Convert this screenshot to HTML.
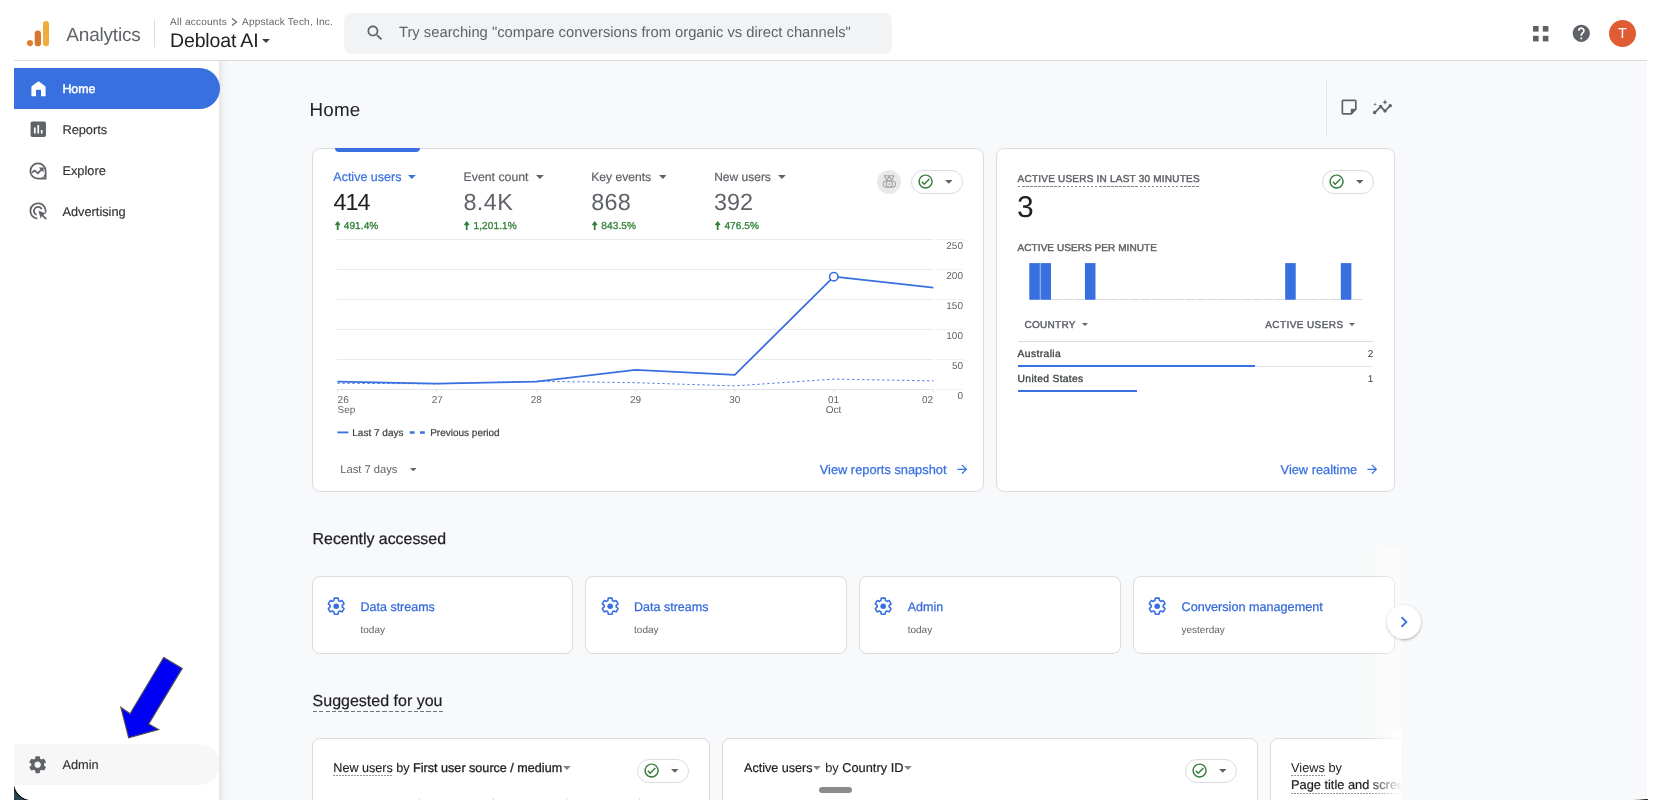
<!DOCTYPE html>
<html lang="en">
<head>
<meta charset="utf-8">
<title>Analytics | Home</title>
<style>
*{box-sizing:border-box;margin:0;padding:0}
html,body{width:1658px;height:806px;overflow:hidden;background:#fff}
body{text-rendering:geometricPrecision;font-family:"Liberation Sans",sans-serif;color:#202124;position:relative;-webkit-font-smoothing:antialiased}
.abs{position:absolute}
.t{position:absolute;white-space:nowrap;line-height:1}
#win{will-change:transform;position:absolute;left:14px;top:0;width:1633px;height:800px;background:#f8f9fa;overflow:hidden;border-radius:0 0 0 18px}
#hdr{position:absolute;left:0;top:0;width:1633px;height:61px;background:#fff;border-bottom:1px solid #dadce0}
#side{position:absolute;left:0;top:61px;width:205px;height:739px;background:#fff}
#sideshadow{position:absolute;left:205.4px;top:61px;width:10px;height:739px;background:linear-gradient(90deg,rgba(60,64,67,.1),rgba(60,64,67,.03) 45%,rgba(60,64,67,0))}
.nav{position:absolute;left:0;width:205.5px;height:41px;border-radius:0 21px 21px 0}
.nav .t{left:48.4px;top:15.3px;font-size:12.8px;color:#2e3033;-webkit-text-stroke:.15px #2e3033}
.card{position:absolute;background:#fff;border:1px solid #dadce0;border-radius:8px}
.blue{color:#3870e0}
.gray{color:#5f6368}
.pill{position:absolute;width:52px;height:24px;border:1px solid #dadce0;border-radius:12px;background:#fff}
</style>
</head>
<body>
<!-- dark corners behind the window's rounded bottom -->
<div class="abs" style="left:14px;top:781px;width:19px;height:19px;background:radial-gradient(circle at 19px 0,#000 0 19.6px,#25404b 21.2px,#2e4d58 24px,#1c2a22 27px)"></div>

<div id="win">
  <div id="hdr">
    <!-- GA logo -->
    <svg class="abs" style="left:13.1px;top:18px" width="26" height="32" viewBox="0 0 26 32">
      <circle cx="16.0" cy="25.1" r="3.1" fill="#e0802e" transform="translate(-13.0,0)"/>
      <rect x="7.7" y="12.5" width="6.3" height="15.8" rx="3.15" fill="#d9782c"/>
      <rect x="16.0" y="3.0" width="6.0" height="25.3" rx="3" fill="#efac3c"/>
    </svg>
    <div class="t" style="left:52.3px;top:25.9px;font-size:19px;color:#5f6368;letter-spacing:-.2px">Analytics</div>
    <div class="abs" style="left:140px;top:20px;width:1px;height:27px;background:#dadce0"></div>
    <div class="t gray" style="left:156px;top:17.6px;font-size:10px;letter-spacing:.25px">All accounts</div>
    <svg class="abs" style="left:217.4px;top:17.6px" width="7" height="8" viewBox="0 0 7 8"><path d="M1 .5 5.6 4 1 7.5" fill="none" stroke="#5f6368" stroke-width="1.1"/></svg>
    <div class="t gray" style="left:228px;top:17.6px;font-size:10px;letter-spacing:.235px">Appstack Tech, Inc.</div>
    <div class="t" style="left:156px;top:32px;font-size:19.5px;letter-spacing:-.15px;color:#202124">Debloat AI</div>
    <svg class="abs" style="left:248px;top:38.6px" width="8" height="4" viewBox="0 0 8 4"><path d="M0 0h8L4 4z" fill="#3c4043"/></svg>
    <!-- search -->
    <div class="abs" style="left:330px;top:13px;width:548px;height:41px;border-radius:8px;background:#f1f3f4"></div>
    <svg class="abs" style="left:350.8px;top:23px" width="20" height="20" viewBox="0 0 24 24"><path fill="#5f6368" d="M15.5 14h-.79l-.28-.27C15.41 12.59 16 11.11 16 9.5 16 5.91 13.09 3 9.5 3S3 5.91 3 9.5 5.91 16 9.5 16c1.61 0 3.09-.59 4.23-1.57l.27.28v.79l5 4.99L20.49 19l-4.99-5zm-6 0C7.01 14 5 11.99 5 9.5S7.01 5 9.5 5 14 7.01 14 9.5 11.99 14 9.5 14z"/></svg>
    <div class="t gray" style="left:385px;top:26.2px;font-size:14.75px">Try searching "compare conversions from organic vs direct channels"</div>
    <!-- right icons -->
    <svg class="abs" style="left:1518.8px;top:26px" width="16" height="16" viewBox="0 0 16 16"><g fill="#5f6060"><rect x="0" y="0" width="5.6" height="5.6"/><rect x="9.8" y="0" width="5.6" height="5.6"/><rect x="0" y="9.8" width="5.6" height="5.6"/><rect x="9.8" y="9.8" width="5.6" height="5.6"/></g></svg>
    <svg class="abs" style="left:1557.2px;top:23.2px" width="20.6" height="20.6" viewBox="0 0 24 24"><path fill="#5f6368" d="M12 2C6.48 2 2 6.48 2 12s4.48 10 10 10 10-4.48 10-10S17.52 2 12 2zm1 17h-2v-2h2v2zm2.07-7.75l-.9.92C13.45 12.9 13 13.5 13 15h-2v-.5c0-1.1.45-2.1 1.17-2.83l1.24-1.26c.37-.36.59-.86.59-1.41 0-1.1-.9-2-2-2s-2 .9-2 2H8c0-2.21 1.79-4 4-4s4 1.79 4 4c0 .88-.36 1.68-.93 2.25z"/></svg>
    <div class="abs" style="left:1594.8px;top:19.9px;width:27.3px;height:27.3px;border-radius:50%;background:#e05d33"></div>
    <div class="t" style="left:1594.8px;top:26.5px;width:27.3px;text-align:center;font-size:14.5px;color:#fff">T</div>
  </div>
  <div id="side">
    <div class="nav" style="top:7px;background:#3870e0"><div class="t" style="color:#fff;font-size:12.4px;top:15.2px;-webkit-text-stroke:.45px #fff">Home</div>
      <svg class="abs" style="left:16.5px;top:12.6px" width="15" height="16" viewBox="0 0 15 16"><path fill="#fff" d="M.4 15.3V6.2Q.4 5.5 1 5.1L6.7.8Q7.5.3 8.3.8L14 5.1Q14.6 5.5 14.6 6.2V15.3H10V9.3Q10 8.7 9.4 8.7H5.6Q5 8.7 5 9.3V15.3Z"/></svg>
    </div>
    <div class="nav" style="top:48px"><div class="t">Reports</div>
      <svg class="abs" style="left:13.7px;top:10.2px" width="20.5" height="20.5" viewBox="0 0 24 24"><path fill="#5f6368" d="M19 3H5c-1.1 0-2 .9-2 2v14c0 1.1.9 2 2 2h14c1.1 0 2-.9 2-2V5c0-1.1-.9-2-2-2zM9 17H7v-7h2v7zm4 0h-2V7h2v10zm4 0h-2v-4h2v4z"/></svg>
    </div>
    <div class="nav" style="top:89px"><div class="t">Explore</div>
      <svg class="abs" style="left:13.85px;top:10.8px" width="20" height="20" viewBox="0 0 20 20"><path d="M10 2.35A7.65 7.65 0 1 0 10 17.65H17.65V10A7.65 7.65 0 0 0 10 2.35Z" fill="none" stroke="#5f6368" stroke-width="1.75" stroke-linejoin="round"/><path d="M17.65 10.6A7.65 7.65 0 0 1 10.6 17.65H17.65Z" fill="#5f6368"/><circle cx="16.1" cy="16.1" r=".55" fill="#fff"/><path d="M3.7 11.6 6.8 9.5 9.8 12.3 13.4 8.7" fill="none" stroke="#5f6368" stroke-width="1.7" stroke-linejoin="round"/><path d="M10.8 6.5H15.6V11.3Z" fill="#5f6368"/></svg>
    </div>
    <div class="nav" style="top:130px"><div class="t">Advertising</div>
      <svg class="abs" style="left:13.85px;top:10.2px" width="20" height="20" viewBox="0 0 20 20"><g fill="none" stroke="#5f6368" stroke-width="1.8"><path d="M9.3 17.62A7.65 7.65 0 1 1 17.45 11.75"/><path d="M8.6 13.85A4.1 4.1 0 1 1 13.7 8.2"/></g><path d="M10.5 9.7 18.1 12.4 15.1 13.75 18.9 17.5 17.6 18.8 13.85 15 12.6 17.7Z" fill="#5f6368"/></svg>
    </div>
    <div class="nav" style="top:683px;background:#f7f7f7"><div class="t">Admin</div>
      <svg class="abs" style="left:13.4px;top:9.8px" width="21.3" height="21.3" viewBox="0 0 24 24"><path fill="#5f6368" d="M19.14 12.94c.04-.3.06-.61.06-.94 0-.32-.02-.64-.07-.94l2.03-1.58c.18-.14.23-.41.12-.61l-1.92-3.32c-.12-.22-.37-.29-.59-.22l-2.39.96c-.5-.38-1.03-.7-1.62-.94l-.36-2.54c-.04-.24-.24-.41-.48-.41h-3.84c-.24 0-.43.17-.47.41l-.36 2.54c-.59.24-1.13.57-1.62.94l-2.39-.96c-.22-.08-.47 0-.59.22L2.74 8.87c-.12.21-.08.47.12.61l2.03 1.58c-.05.3-.09.63-.09.94s.02.64.07.94l-2.03 1.58c-.18.14-.23.41-.12.61l1.92 3.32c.12.22.37.29.59.22l2.39-.96c.5.38 1.03.7 1.62.94l.36 2.54c.05.24.24.41.48.41h3.84c.24 0 .44-.17.47-.41l.36-2.54c.59-.24 1.13-.56 1.62-.94l2.39.96c.22.08.47 0 .59-.22l1.92-3.32c.12-.22.07-.47-.12-.61l-2.01-1.58zM12 15.6c-1.98 0-3.6-1.62-3.6-3.6s1.62-3.6 3.6-3.6 3.6 1.62 3.6 3.6-1.62 3.6-3.6 3.6z"/></svg>
    </div>
    <!-- annotation arrow -->
    <svg class="abs" style="left:100px;top:590px" width="80" height="95" viewBox="114 651 80 95"><path d="M163.7 657.5 182.2 668.4 148.7 724 158.5 729.6 128.7 737.8 120.9 707.5 130.1 713.7Z" fill="#0000f5" stroke="#4d4d4d" stroke-width="1.2"/></svg>
  </div>
  <div id="sideshadow"></div>
  <div id="main" style="position:absolute;left:-14px;top:0;width:1658px;height:800px">
<div class="t" style="left:309.5px;top:101.1px;font-size:18.8px;letter-spacing:.2px;color:#202124">Home</div>
<div class="abs" style="left:1326px;top:80px;width:1px;height:55px;background:#e3e5e8"></div>
<svg class="abs" style="left:1338.6px;top:97.1px" width="20.2" height="20.2" viewBox="0 0 24 24"><path fill="#5f6368" d="M19 5v9h-5v5H5V5h14m0-2H5c-1.1 0-2 .9-2 2v14c0 1.1.9 2 2 2h10l6-6V5c0-1.1-.9-2-2-2z"/><path fill="#5f6368" d="M14.5 19.6V14.5h5.1z"/></svg>
<svg class="abs" style="left:1372.3px;top:97.4px" width="20.8" height="20.8" viewBox="0 0 24 24"><path fill="#5f6368" d="M21 8c-1.45 0-2.26 1.44-1.93 2.51l-3.55 3.56c-.3-.09-.74-.09-1.04 0l-2.55-2.55C12.27 10.45 11.46 9 10 9c-1.45 0-2.27 1.44-1.93 2.52l-4.56 4.55C2.44 15.74 1 16.55 1 18c0 1.1.9 2 2 2 1.45 0 2.26-1.44 1.93-2.51l4.55-4.56c.3.09.74.09 1.04 0l2.55 2.55C12.73 16.55 13.54 18 15 18c1.45 0 2.27-1.44 1.93-2.52l3.56-3.55c1.07.33 2.51-.48 2.51-1.93 0-1.1-.9-2-2-2z"/><path fill="#5f6368" d="M15 9l.94-2.07L18 6l-2.06-.93L15 3l-.92 2.07L12 6l2.08.93zM3.5 11L4 9l2-.5L4 8l-.5-2L3 8l-2 .5L3 9z"/></svg>
<div class="card" style="left:312px;top:148px;width:672px;height:344px"></div>
<div class="abs" style="left:334.7px;top:148px;width:85.6px;height:4.4px;background:#3870e0;border-radius:0 0 4px 4px"></div>
<div class="t blue" style="left:333.3px;top:170.5px;font-size:12.5px;-webkit-text-stroke:.2px #3870e0">Active users</div><svg class="abs" style="left:408.3px;top:174.9px" width="7.8" height="3.9" viewBox="0 0 8 4"><path d="M0 0h8L4 4z" fill="#3870e0"/></svg>
<div class="t gray" style="left:463.6px;top:170.6px;font-size:12.3px;-webkit-text-stroke:.2px #5f6368">Event count</div><svg class="abs" style="left:535.8px;top:174.9px" width="7.8" height="3.9" viewBox="0 0 8 4"><path d="M0 0h8L4 4z" fill="#5f6368"/></svg>
<div class="t gray" style="left:591.3px;top:170.7px;font-size:12.1px;-webkit-text-stroke:.2px #5f6368">Key events</div><svg class="abs" style="left:658.7px;top:174.9px" width="7.8" height="3.9" viewBox="0 0 8 4"><path d="M0 0h8L4 4z" fill="#5f6368"/></svg>
<div class="t gray" style="left:714.2px;top:170.8px;font-size:12px;-webkit-text-stroke:.2px #5f6368">New users</div><svg class="abs" style="left:778.1px;top:174.9px" width="7.8" height="3.9" viewBox="0 0 8 4"><path d="M0 0h8L4 4z" fill="#5f6368"/></svg>
<div class="t" style="left:333.6px;top:191.1px;font-size:23.4px;letter-spacing:-1.1px;color:#202124">414</div>
<div class="t gray" style="left:463.4px;top:191.1px;font-size:23.4px;letter-spacing:.45px">8.4K</div>
<div class="t gray" style="left:591.2px;top:191.1px;font-size:23.4px;letter-spacing:.3px">868</div>
<div class="t gray" style="left:714px;top:191.1px;font-size:23.4px;letter-spacing:0px">392</div>
<svg class="abs" style="left:334.6px;top:220.7px" width="5.4" height="9.4" viewBox="0 0 5.4 9.4"><path d="M2.7 0 5.4 3.6 5 4.2H3.6V9.4H1.8V4.2H.4L0 3.6Z" fill="#33803a"/></svg>
<div class="t" style="left:343.70000000000005px;top:222.4px;font-size:10.1px;color:#33803a;letter-spacing:.08px;-webkit-text-stroke:.3px #33803a">491.4%</div>
<svg class="abs" style="left:464.4px;top:220.7px" width="5.4" height="9.4" viewBox="0 0 5.4 9.4"><path d="M2.7 0 5.4 3.6 5 4.2H3.6V9.4H1.8V4.2H.4L0 3.6Z" fill="#33803a"/></svg>
<div class="t" style="left:473.5px;top:222.4px;font-size:10.1px;color:#33803a;letter-spacing:.08px;-webkit-text-stroke:.3px #33803a">1,201.1%</div>
<svg class="abs" style="left:592.2px;top:220.7px" width="5.4" height="9.4" viewBox="0 0 5.4 9.4"><path d="M2.7 0 5.4 3.6 5 4.2H3.6V9.4H1.8V4.2H.4L0 3.6Z" fill="#33803a"/></svg>
<div class="t" style="left:601.3000000000001px;top:222.4px;font-size:10.1px;color:#33803a;letter-spacing:.08px;-webkit-text-stroke:.3px #33803a">843.5%</div>
<svg class="abs" style="left:715.3px;top:220.7px" width="5.4" height="9.4" viewBox="0 0 5.4 9.4"><path d="M2.7 0 5.4 3.6 5 4.2H3.6V9.4H1.8V4.2H.4L0 3.6Z" fill="#33803a"/></svg>
<div class="t" style="left:724.4px;top:222.4px;font-size:10.1px;color:#33803a;letter-spacing:.08px;-webkit-text-stroke:.3px #33803a">476.5%</div>
<div class="abs" style="left:877.1px;top:169.7px;width:24px;height:24px;border-radius:50%;background:#e9e9ea"></div>
<svg class="abs" style="left:877px;top:170px" width="24" height="24" viewBox="0 0 24 24"><g fill="none" stroke="#a3a5a8" stroke-width="1.15" stroke-linejoin="round"><path d="M7.4 5.7H17L14.6 10.6 12.2 6 9.8 10.6Z"/><rect x="6.1" y="11" width="12.4" height="6.2" rx="3.1"/><circle cx="12.3" cy="14.1" r="3.1"/></g><circle cx="12.3" cy="14.1" r=".9" fill="#a3a5a8"/></svg>
<div class="pill" style="left:911.2px;top:170.1px"><svg class="abs" style="left:4.8px;top:2.1px" width="17.2" height="17.2" viewBox="0 0 24 24"><path fill="#35793a" d="M12 2C6.48 2 2 6.48 2 12s4.48 10 10 10 10-4.48 10-10S17.52 2 12 2zm0 18c-4.41 0-8-3.59-8-8s3.59-8 8-8 8 3.59 8 8-3.59 8-8 8zm4.59-12.42L10 14.17l-2.59-2.58L6 13l4 4 8-8z"/></svg><svg class="abs" style="left:32.5px;top:9.3px" width="7.6" height="3.8" viewBox="0 0 8 4"><path d="M0 0h8L4 4z" fill="#5f6368"/></svg></div>
<svg class="abs" style="left:0;top:0" width="1658" height="800" viewBox="0 0 1658 800"><path d="M337 239.5H933.4" stroke="#e8eaed" stroke-width="1"/><path d="M936.4 239.5H963" stroke="#eff0f2" stroke-width="1"/><path d="M337 269.5H933.4" stroke="#e8eaed" stroke-width="1"/><path d="M936.4 269.5H963" stroke="#eff0f2" stroke-width="1"/><path d="M337 299.5H933.4" stroke="#e8eaed" stroke-width="1"/><path d="M936.4 299.5H963" stroke="#eff0f2" stroke-width="1"/><path d="M337 329.5H933.4" stroke="#e8eaed" stroke-width="1"/><path d="M936.4 329.5H963" stroke="#eff0f2" stroke-width="1"/><path d="M337 359.5H933.4" stroke="#e8eaed" stroke-width="1"/><path d="M936.4 359.5H963" stroke="#eff0f2" stroke-width="1"/><path d="M337 389.5H933.4" stroke="#e1e3e6" stroke-width="1"/><path d="M936.4 389.5H963" stroke="#eff0f2" stroke-width="1"/><path d="M337.5 389.5V392.5" stroke="#e1e3e6" stroke-width="1"/><path d="M436.8 389.5V392.5" stroke="#e1e3e6" stroke-width="1"/><path d="M536.2 389.5V392.5" stroke="#e1e3e6" stroke-width="1"/><path d="M635.5 389.5V392.5" stroke="#e1e3e6" stroke-width="1"/><path d="M734.8 389.5V392.5" stroke="#e1e3e6" stroke-width="1"/><path d="M834.1 389.5V392.5" stroke="#e1e3e6" stroke-width="1"/><path d="M933.4 389.5V392.5" stroke="#e1e3e6" stroke-width="1"/><path d="M337.4 383.3 436.8 383.8 536.2 381.2 635.5 382.7 734.8 385.9 834.1 379.1 933.4 380.9" fill="none" stroke="#3870e0" stroke-width="1" stroke-dasharray="2.4 2.6" opacity=".9"/><path d="M337.4 381.7 436.8 383.6 536.2 381.6 635.5 369.8 734.8 374.8 833.8 276.7 933.4 287.7" fill="none" stroke="#3870e0" stroke-width="1.75" stroke-linejoin="round"/><circle cx="833.8" cy="276.7" r="4.2" fill="#fff" stroke="#3870e0" stroke-width="1.6"/><path d="M337.4 432.4H348.4" stroke="#3870e0" stroke-width="1.8"/><path d="M409.8 432.5H425" stroke="#3870e0" stroke-width="2.3" stroke-dasharray="4.8 5.4"/></svg>
<div class="t gray" style="left:913px;width:50px;text-align:right;top:242.0px;font-size:10px">250</div>
<div class="t gray" style="left:913px;width:50px;text-align:right;top:272.0px;font-size:10px">200</div>
<div class="t gray" style="left:913px;width:50px;text-align:right;top:302.0px;font-size:10px">150</div>
<div class="t gray" style="left:913px;width:50px;text-align:right;top:332.0px;font-size:10px">100</div>
<div class="t gray" style="left:913px;width:50px;text-align:right;top:362.0px;font-size:10px">50</div>
<div class="t gray" style="left:913px;width:50px;text-align:right;top:392.0px;font-size:10px">0</div>
<div class="t gray" style="left:337.6px;top:396px;font-size:10px">26</div><div class="t gray" style="left:337.6px;top:406.3px;font-size:10px">Sep</div>
<div class="t gray" style="left:417.2px;width:40px;text-align:center;top:396px;font-size:10px">27</div>
<div class="t gray" style="left:516.3px;width:40px;text-align:center;top:396px;font-size:10px">28</div>
<div class="t gray" style="left:615.5px;width:40px;text-align:center;top:396px;font-size:10px">29</div>
<div class="t gray" style="left:714.7px;width:40px;text-align:center;top:396px;font-size:10px">30</div>
<div class="t gray" style="left:813.6px;width:40px;text-align:center;top:396px;font-size:10px">01</div>
<div class="t gray" style="left:813.6px;width:40px;text-align:center;top:406.3px;font-size:10px">Oct</div>
<div class="t gray" style="left:893.2px;width:40px;text-align:right;top:396px;font-size:10px">02</div>
<div class="t" style="left:352.3px;top:429.4px;font-size:10px;color:#3c4043;-webkit-text-stroke:.2px #3c4043">Last 7 days</div>
<div class="t" style="left:430.2px;top:429.4px;font-size:10px;color:#3c4043;-webkit-text-stroke:.2px #3c4043">Previous period</div>
<div class="t gray" style="left:340.2px;top:464.7px;font-size:11.2px">Last 7 days</div><svg class="abs" style="left:409.8px;top:467.6px" width="6.6" height="3.3" viewBox="0 0 8 4"><path d="M0 0h8L4 4z" fill="#5f6368"/></svg>
<div class="t blue" style="left:819.7px;top:464.4px;font-size:12.85px;-webkit-text-stroke:.25px #3870e0">View reports snapshot</div>
<svg class="abs" style="left:954.7px;top:462.2px" width="14.6" height="14.6" viewBox="0 0 24 24"><path fill="#3870e0" d="M12 4l-1.41 1.41L16.17 11H4v2h12.17l-5.58 5.59L12 20l8-8z"/></svg>
<div class="card" style="left:996px;top:148px;width:399px;height:344px"></div>
<div class="t gray" style="left:1017.6px;top:174.5px;font-size:10px;letter-spacing:.22px;-webkit-text-stroke:.45px #5f6368">ACTIVE USERS IN LAST 30 MINUTES</div>
<div class="abs" style="left:1017.8px;top:186px;width:182.2px;height:1px;background:repeating-linear-gradient(90deg,#80868b 0 2.5px,transparent 2.5px 4.05px)"></div>
<div class="t" style="left:1016.9px;top:192.9px;font-size:30px;color:#202124">3</div>
<div class="pill" style="left:1322px;top:170.1px"><svg class="abs" style="left:4.8px;top:2.1px" width="17.2" height="17.2" viewBox="0 0 24 24"><path fill="#35793a" d="M12 2C6.48 2 2 6.48 2 12s4.48 10 10 10 10-4.48 10-10S17.52 2 12 2zm0 18c-4.41 0-8-3.59-8-8s3.59-8 8-8 8 3.59 8 8-3.59 8-8 8zm4.59-12.42L10 14.17l-2.59-2.58L6 13l4 4 8-8z"/></svg><svg class="abs" style="left:32.5px;top:9.3px" width="7.6" height="3.8" viewBox="0 0 8 4"><path d="M0 0h8L4 4z" fill="#5f6368"/></svg></div>
<div class="t gray" style="left:1017.6px;top:244.1px;font-size:10px;letter-spacing:.065px;-webkit-text-stroke:.45px #5f6368">ACTIVE USERS PER MINUTE</div>
<svg class="abs" style="left:0;top:0" width="1658" height="800" viewBox="0 0 1658 800"><rect x="1029.30" y="263.1" width="10.55" height="36.7" fill="#3870e0"/><rect x="1040.42" y="263.1" width="10.55" height="36.7" fill="#3870e0"/><rect x="1051.55" y="299" width="10.2" height="1" fill="#d6d8db"/><rect x="1062.67" y="299" width="10.2" height="1" fill="#d6d8db"/><rect x="1073.80" y="299" width="10.2" height="1" fill="#d6d8db"/><rect x="1084.92" y="263.1" width="10.55" height="36.7" fill="#3870e0"/><rect x="1096.05" y="299" width="10.2" height="1" fill="#d6d8db"/><rect x="1107.17" y="299" width="10.2" height="1" fill="#d6d8db"/><rect x="1118.30" y="299" width="10.2" height="1" fill="#d6d8db"/><rect x="1129.42" y="299" width="10.2" height="1" fill="#d6d8db"/><rect x="1140.55" y="299" width="10.2" height="1" fill="#d6d8db"/><rect x="1151.67" y="299" width="10.2" height="1" fill="#d6d8db"/><rect x="1162.80" y="299" width="10.2" height="1" fill="#d6d8db"/><rect x="1173.92" y="299" width="10.2" height="1" fill="#d6d8db"/><rect x="1185.05" y="299" width="10.2" height="1" fill="#d6d8db"/><rect x="1196.17" y="299" width="10.2" height="1" fill="#d6d8db"/><rect x="1207.30" y="299" width="10.2" height="1" fill="#d6d8db"/><rect x="1218.42" y="299" width="10.2" height="1" fill="#d6d8db"/><rect x="1229.55" y="299" width="10.2" height="1" fill="#d6d8db"/><rect x="1240.67" y="299" width="10.2" height="1" fill="#d6d8db"/><rect x="1251.80" y="299" width="10.2" height="1" fill="#d6d8db"/><rect x="1262.92" y="299" width="10.2" height="1" fill="#d6d8db"/><rect x="1274.05" y="299" width="10.2" height="1" fill="#d6d8db"/><rect x="1285.17" y="263.1" width="10.55" height="36.7" fill="#3870e0"/><rect x="1296.30" y="299" width="10.2" height="1" fill="#d6d8db"/><rect x="1307.42" y="299" width="10.2" height="1" fill="#d6d8db"/><rect x="1318.55" y="299" width="10.2" height="1" fill="#d6d8db"/><rect x="1329.67" y="299" width="10.2" height="1" fill="#d6d8db"/><rect x="1340.80" y="263.1" width="10.55" height="36.7" fill="#3870e0"/><rect x="1351.92" y="299" width="10.2" height="1" fill="#d6d8db"/></svg>
<div class="t gray" style="left:1024.4px;top:321.2px;font-size:10px;letter-spacing:.3px;-webkit-text-stroke:.45px #5f6368">COUNTRY</div><svg class="abs" style="left:1081.6px;top:323.3px" width="6" height="3.0" viewBox="0 0 8 4"><path d="M0 0h8L4 4z" fill="#5f6368"/></svg>
<div class="t gray" style="left:1265.3px;top:321.2px;font-size:10px;letter-spacing:.4px;-webkit-text-stroke:.45px #5f6368">ACTIVE USERS</div><svg class="abs" style="left:1349.2px;top:323.3px" width="6" height="3.0" viewBox="0 0 8 4"><path d="M0 0h8L4 4z" fill="#5f6368"/></svg>
<div class="abs" style="left:1017.8px;top:341px;width:355.6px;height:1px;background:#dadce0"></div>
<div class="t" style="left:1017.6px;top:350.2px;font-size:10.3px;color:#3c4043;letter-spacing:.38px;-webkit-text-stroke:.3px #3c4043">Australia</div>
<div class="t" style="left:1323.4px;width:50px;text-align:right;top:349.7px;font-size:10px;color:#3c4043">2</div>
<div class="abs" style="left:1017.8px;top:366px;width:355.6px;height:1px;background:#e4e6e9"></div>
<div class="abs" style="left:1018.2px;top:365.4px;width:237px;height:2px;background:#3870e0"></div>
<div class="t" style="left:1017.6px;top:375px;font-size:10.3px;color:#3c4043;letter-spacing:.32px;-webkit-text-stroke:.3px #3c4043">United States</div>
<div class="t" style="left:1323.4px;width:50px;text-align:right;top:374.6px;font-size:10px;color:#3c4043">1</div>
<div class="abs" style="left:1018.2px;top:390px;width:119px;height:2px;background:#3870e0"></div>
<div class="t blue" style="left:1280.6px;top:464.2px;font-size:12.8px;-webkit-text-stroke:.25px #3870e0">View realtime</div>
<svg class="abs" style="left:1365.1px;top:462.2px" width="14.6" height="14.6" viewBox="0 0 24 24"><path fill="#3870e0" d="M12 4l-1.41 1.41L16.17 11H4v2h12.17l-5.58 5.59L12 20l8-8z"/></svg>
<div class="t" style="left:312.6px;top:532.2px;font-size:15.9px;color:#202124;-webkit-text-stroke:.25px #202124">Recently accessed</div>
<div class="card" style="left:312.2px;top:576px;width:261px;height:78px"></div><svg class="abs" style="left:325.0px;top:595px" width="22.4" height="22.4" viewBox="0 0 24 24"><path d="M19.14 12.94c.04-.3.06-.61.06-.94 0-.32-.02-.64-.07-.94l2.03-1.58c.18-.14.23-.41.12-.61l-1.92-3.32c-.12-.22-.37-.29-.59-.22l-2.39.96c-.5-.38-1.03-.7-1.62-.94l-.36-2.54c-.04-.24-.24-.41-.48-.41h-3.84c-.24 0-.43.17-.47.41l-.36 2.54c-.59.24-1.13.57-1.62.94l-2.39-.96c-.22-.08-.47 0-.59.22L2.74 8.87c-.12.21-.08.47.12.61l2.03 1.58c-.05.3-.09.63-.09.94s.02.64.07.94l-2.03 1.58c-.18.14-.23.41-.12.61l1.92 3.32c.12.22.37.29.59.22l2.39-.96c.5.38 1.03.7 1.62.94l.36 2.54c.05.24.24.41.48.41h3.84c.24 0 .44-.17.47-.41l.36-2.54c.59-.24 1.13-.56 1.62-.94l2.39.96c.22.08.47 0 .59-.22l1.92-3.32c.12-.22.07-.47-.12-.61l-2.01-1.58z" fill="none" stroke="#3870e0" stroke-width="1.9" stroke-linejoin="round" transform="translate(12 12) scale(.9) translate(-12 -12)"/><circle cx="12" cy="12" r="3" fill="#3870e0"/></svg><div class="t" style="left:360.5px;top:600.7px;font-size:12.5px;color:#3569d8;-webkit-text-stroke:.25px #3569d8">Data streams</div><div class="t gray" style="left:360.5px;top:625.9px;font-size:10px">today</div>
<div class="card" style="left:585.3px;top:576px;width:261.5px;height:78px"></div><svg class="abs" style="left:598.6px;top:595px" width="22.4" height="22.4" viewBox="0 0 24 24"><path d="M19.14 12.94c.04-.3.06-.61.06-.94 0-.32-.02-.64-.07-.94l2.03-1.58c.18-.14.23-.41.12-.61l-1.92-3.32c-.12-.22-.37-.29-.59-.22l-2.39.96c-.5-.38-1.03-.7-1.62-.94l-.36-2.54c-.04-.24-.24-.41-.48-.41h-3.84c-.24 0-.43.17-.47.41l-.36 2.54c-.59.24-1.13.57-1.62.94l-2.39-.96c-.22-.08-.47 0-.59.22L2.74 8.87c-.12.21-.08.47.12.61l2.03 1.58c-.05.3-.09.63-.09.94s.02.64.07.94l-2.03 1.58c-.18.14-.23.41-.12.61l1.92 3.32c.12.22.37.29.59.22l2.39-.96c.5.38 1.03.7 1.62.94l.36 2.54c.05.24.24.41.48.41h3.84c.24 0 .44-.17.47-.41l.36-2.54c.59-.24 1.13-.56 1.62-.94l2.39.96c.22.08.47 0 .59-.22l1.92-3.32c.12-.22.07-.47-.12-.61l-2.01-1.58z" fill="none" stroke="#3870e0" stroke-width="1.9" stroke-linejoin="round" transform="translate(12 12) scale(.9) translate(-12 -12)"/><circle cx="12" cy="12" r="3" fill="#3870e0"/></svg><div class="t" style="left:634.1px;top:600.7px;font-size:12.5px;color:#3569d8;-webkit-text-stroke:.25px #3569d8">Data streams</div><div class="t gray" style="left:634.1px;top:625.9px;font-size:10px">today</div>
<div class="card" style="left:859.4px;top:576px;width:261.5px;height:78px"></div><svg class="abs" style="left:872.2px;top:595px" width="22.4" height="22.4" viewBox="0 0 24 24"><path d="M19.14 12.94c.04-.3.06-.61.06-.94 0-.32-.02-.64-.07-.94l2.03-1.58c.18-.14.23-.41.12-.61l-1.92-3.32c-.12-.22-.37-.29-.59-.22l-2.39.96c-.5-.38-1.03-.7-1.62-.94l-.36-2.54c-.04-.24-.24-.41-.48-.41h-3.84c-.24 0-.43.17-.47.41l-.36 2.54c-.59.24-1.13.57-1.62.94l-2.39-.96c-.22-.08-.47 0-.59.22L2.74 8.87c-.12.21-.08.47.12.61l2.03 1.58c-.05.3-.09.63-.09.94s.02.64.07.94l-2.03 1.58c-.18.14-.23.41-.12.61l1.92 3.32c.12.22.37.29.59.22l2.39-.96c.5.38 1.03.7 1.62.94l.36 2.54c.05.24.24.41.48.41h3.84c.24 0 .44-.17.47-.41l.36-2.54c.59-.24 1.13-.56 1.62-.94l2.39.96c.22.08.47 0 .59-.22l1.92-3.32c.12-.22.07-.47-.12-.61l-2.01-1.58z" fill="none" stroke="#3870e0" stroke-width="1.9" stroke-linejoin="round" transform="translate(12 12) scale(.9) translate(-12 -12)"/><circle cx="12" cy="12" r="3" fill="#3870e0"/></svg><div class="t" style="left:907.7px;top:600.7px;font-size:12.5px;color:#3569d8;-webkit-text-stroke:.25px #3569d8">Admin</div><div class="t gray" style="left:907.7px;top:625.9px;font-size:10px">today</div>
<div class="card" style="left:1133.2px;top:576px;width:261.5px;height:78px"></div><svg class="abs" style="left:1146.0px;top:595px" width="22.4" height="22.4" viewBox="0 0 24 24"><path d="M19.14 12.94c.04-.3.06-.61.06-.94 0-.32-.02-.64-.07-.94l2.03-1.58c.18-.14.23-.41.12-.61l-1.92-3.32c-.12-.22-.37-.29-.59-.22l-2.39.96c-.5-.38-1.03-.7-1.62-.94l-.36-2.54c-.04-.24-.24-.41-.48-.41h-3.84c-.24 0-.43.17-.47.41l-.36 2.54c-.59.24-1.13.57-1.62.94l-2.39-.96c-.22-.08-.47 0-.59.22L2.74 8.87c-.12.21-.08.47.12.61l2.03 1.58c-.05.3-.09.63-.09.94s.02.64.07.94l-2.03 1.58c-.18.14-.23.41-.12.61l1.92 3.32c.12.22.37.29.59.22l2.39-.96c.5.38 1.03.7 1.62.94l.36 2.54c.05.24.24.41.48.41h3.84c.24 0 .44-.17.47-.41l.36-2.54c.59-.24 1.13-.56 1.62-.94l2.39.96c.22.08.47 0 .59-.22l1.92-3.32c.12-.22.07-.47-.12-.61l-2.01-1.58z" fill="none" stroke="#3870e0" stroke-width="1.9" stroke-linejoin="round" transform="translate(12 12) scale(.9) translate(-12 -12)"/><circle cx="12" cy="12" r="3" fill="#3870e0"/></svg><div class="t" style="left:1181.5px;top:600.7px;font-size:12.65px;color:#3569d8;-webkit-text-stroke:.25px #3569d8">Conversion management</div><div class="t gray" style="left:1181.5px;top:625.9px;font-size:10px">yesterday</div>
<div class="abs" style="left:1375px;top:570px;width:26px;height:90px;background:linear-gradient(90deg,rgba(248,249,250,0),rgba(248,249,250,.0))"></div>
<div class="abs" style="left:1387.4px;top:605.4px;width:33.8px;height:33.8px;border-radius:50%;background:#fff;box-shadow:0 1px 3px rgba(60,64,67,.3),0 1px 2px rgba(60,64,67,.15)"></div>
<svg class="abs" style="left:1393.3px;top:611.3px" width="22" height="22" viewBox="0 0 24 24"><path fill="#3870e0" d="M10 6L8.59 7.41 13.17 12l-4.58 4.59L10 18l6-6z"/></svg>
<div class="t" style="left:312.6px;top:694.2px;font-size:16px;color:#202124;-webkit-text-stroke:.2px #202124">Suggested for you</div>
<div class="abs" style="left:312.8px;top:711px;width:130px;height:1px;background:repeating-linear-gradient(90deg,#70757a 0 4.2px,transparent 4.2px 6.3px)"></div>
<div class="card" style="left:312px;top:738px;width:398.2px;height:80px"></div>
<div class="card" style="left:721.8px;top:738px;width:536.2px;height:80px"></div>
<div class="card" style="left:1270px;top:738px;width:300px;height:80px"></div>
<div class="t" style="left:333.3px;top:761.5px;font-size:12.6px;color:#202124;-webkit-text-stroke:.12px #202124">New users by <span style="-webkit-text-stroke:.3px #202124">First user source / medium</span></div><svg class="abs" style="left:563.3px;top:766px" width="7.8" height="3.9" viewBox="0 0 8 4"><path d="M0 0h8L4 4z" fill="#80868b"/></svg>
<div class="abs" style="left:333.1px;top:775px;width:59px;height:1.4px;background:repeating-linear-gradient(90deg,#8f9499 0 1.8px,transparent 1.8px 3px)"></div>
<div class="pill" style="left:637.3px;top:759.2px"><svg class="abs" style="left:4.8px;top:2.1px" width="17.2" height="17.2" viewBox="0 0 24 24"><path fill="#35793a" d="M12 2C6.48 2 2 6.48 2 12s4.48 10 10 10 10-4.48 10-10S17.52 2 12 2zm0 18c-4.41 0-8-3.59-8-8s3.59-8 8-8 8 3.59 8 8-3.59 8-8 8zm4.59-12.42L10 14.17l-2.59-2.58L6 13l4 4 8-8z"/></svg><svg class="abs" style="left:32.5px;top:9.3px" width="7.6" height="3.8" viewBox="0 0 8 4"><path d="M0 0h8L4 4z" fill="#5f6368"/></svg></div>
<div class="abs" style="left:418.9px;top:797.5px;width:1px;height:3px;background:#dadce0"></div>
<div class="abs" style="left:492.5px;top:797.5px;width:1px;height:3px;background:#dadce0"></div>
<div class="abs" style="left:566.1px;top:797.5px;width:1px;height:3px;background:#dadce0"></div>
<div class="abs" style="left:639.4px;top:797.5px;width:1px;height:3px;background:#dadce0"></div>
<div class="t" style="left:744px;top:761.5px;font-size:12.6px;color:#202124;-webkit-text-stroke:.2px #202124">Active users</div><svg class="abs" style="left:813.3px;top:766px" width="7.8" height="3.9" viewBox="0 0 8 4"><path d="M0 0h8L4 4z" fill="#80868b"/></svg>
<div class="t" style="left:825.2px;top:761.5px;font-size:12.8px;color:#202124">by <span style="-webkit-text-stroke:.2px #202124">Country ID</span></div><svg class="abs" style="left:904.2px;top:766px" width="7.8" height="3.9" viewBox="0 0 8 4"><path d="M0 0h8L4 4z" fill="#80868b"/></svg>
<div class="abs" style="left:819px;top:787.2px;width:32.6px;height:5.4px;border-radius:3px;background:#898b8d"></div>
<div class="pill" style="left:1185px;top:759.2px"><svg class="abs" style="left:4.8px;top:2.1px" width="17.2" height="17.2" viewBox="0 0 24 24"><path fill="#35793a" d="M12 2C6.48 2 2 6.48 2 12s4.48 10 10 10 10-4.48 10-10S17.52 2 12 2zm0 18c-4.41 0-8-3.59-8-8s3.59-8 8-8 8 3.59 8 8-3.59 8-8 8zm4.59-12.42L10 14.17l-2.59-2.58L6 13l4 4 8-8z"/></svg><svg class="abs" style="left:32.5px;top:9.3px" width="7.6" height="3.8" viewBox="0 0 8 4"><path d="M0 0h8L4 4z" fill="#5f6368"/></svg></div>
<div class="t" style="left:1291px;top:761.5px;font-size:12.8px;color:#202124">Views by</div>
<div class="abs" style="left:1291.3px;top:775px;width:34px;height:1.4px;background:repeating-linear-gradient(90deg,#8f9499 0 1.8px,transparent 1.8px 3px)"></div>
<div class="t" style="left:1291px;top:779.3px;font-size:12.8px;color:#202124;-webkit-text-stroke:.2px #202124">Page title and screen class</div>
<div class="abs" style="left:1291.3px;top:792.6px;width:160px;height:1.4px;background:repeating-linear-gradient(90deg,#8f9499 0 1.8px,transparent 1.8px 3px)"></div>
<div class="abs" style="left:1368px;top:730px;width:33px;height:70px;background:linear-gradient(90deg,rgba(255,255,255,0),rgba(255,255,255,.95))"></div><div class="abs" style="left:1368px;top:548px;width:33px;height:182px;background:linear-gradient(90deg,rgba(255,255,255,0),rgba(255,255,255,.45))"></div>
<div class="abs" style="left:1401px;top:730px;width:246px;height:70px;background:#f8f9fa"></div>
</div>
</div>
<div class="abs" style="left:1632px;top:798.7px;width:15.6px;height:1.5px;border-radius:0 1px 1px 0;background:linear-gradient(90deg,rgba(0,0,0,0),rgba(0,0,0,.2) 40%,rgba(0,0,0,.9) 88%)"></div>
</body>
</html>
